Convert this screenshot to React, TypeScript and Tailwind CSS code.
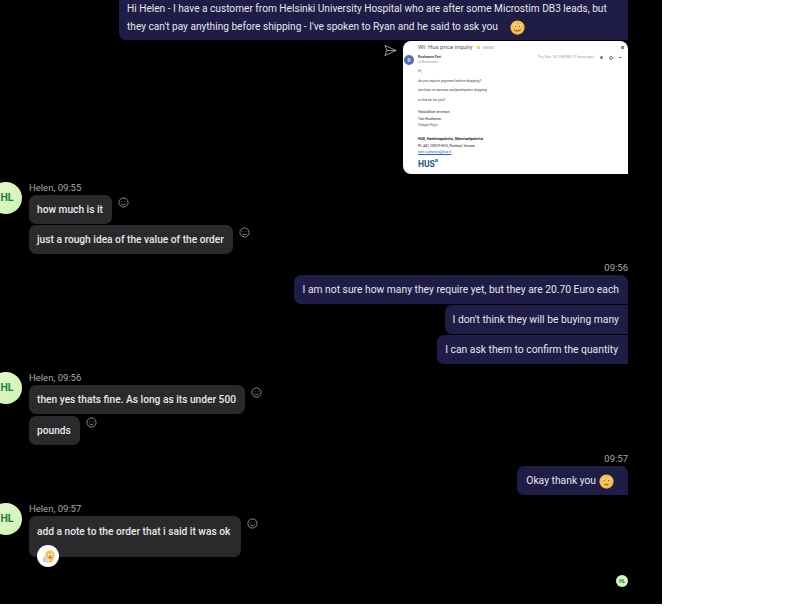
import { ReactNode } from 'react';

const font = { fontFamily: 'Roboto, "Noto Sans", sans-serif' };

function Smile({ className = '' }: { className?: string }) {
  return (
    <svg viewBox="0 0 12 12" className={`shrink-0 text-[#b5b5b5] ${className}`} fill="none" stroke="currentColor" strokeWidth="0.8">
      <circle cx="6" cy="6" r="5" />
      <circle cx="4.2" cy="4.8" r="0.5" fill="currentColor" stroke="none" />
      <circle cx="7.8" cy="4.8" r="0.5" fill="currentColor" stroke="none" />
      <path d="M3.6 7.4c1.2 1.4 3.6 1.4 4.8 0" />
    </svg>
  );
}

function Emoji({ wink = false }: { wink?: boolean }) {
  return (
    <svg viewBox="0 0 16 16" className="w-[15px] h-[15px] shrink-0">
      <circle cx="8" cy="8" r="7.6" fill="#f6c04a" />
      <circle cx="5.4" cy="6.4" r="1.5" fill="#fff" />
      <circle cx="10.6" cy="6.4" r="1.5" fill="#fff" />
      <circle cx="5.6" cy="6.6" r="0.8" fill="#4a3510" />
      <circle cx="10.4" cy="6.6" r="0.8" fill="#4a3510" />
      <path d={wink ? 'M6 11.4h4' : 'M4.6 10.4c1.8 1.8 5 1.8 6.8 0'} fill="none" stroke="#6b4a10" strokeWidth="1" />
    </svg>
  );
}

function ThinkEmoji() {
  return (
    <svg viewBox="0 0 16 16" className="w-[15px] h-[15px] shrink-0">
      <circle cx="9.5" cy="6.5" r="5" fill="#f6c04a" />
      <circle cx="8" cy="5.6" r="1" fill="#fff" />
      <circle cx="11.4" cy="5.6" r="1" fill="#fff" />
      <path d="M8 9h3" fill="none" stroke="#6b4a10" strokeWidth="0.9" />
      <rect x="2" y="8" width="6" height="6.5" rx="1" fill="#d4d4d4" />
      <path d="M9 10.5h4l-1 4H8z" fill="#f6c04a" />
    </svg>
  );
}

function Avatar() {
  return (
    <div className="w-[22px] h-[32px] mt-[1px] shrink-0 overflow-hidden">
      <div className="w-[32px] h-[32px] -ml-[10px] rounded-full bg-gradient-to-br from-[#e6fbd2] to-[#cdf2ae] flex items-center justify-center text-[10.5px] font-bold text-[#15803d]">
        <span className="pl-[2px]">HL</span>
      </div>
    </div>
  );
}

function Incoming({ time, children }: { time: string; children: ReactNode }) {
  return (
    <div className="flex gap-[7px]">
      <Avatar />
      <div className="flex flex-col">
        <div className="text-[9.5px] leading-[14px] text-[#a8a8a8]">Helen, {time}</div>
        {children}
      </div>
    </div>
  );
}

function Bubble({ text, iconTop = 2, mb = 1 }: { text: string; iconTop?: number; mb?: number }) {
  return (
    <div className="flex items-start gap-[6px]" style={{ marginBottom: mb }}>
      <div className="h-[29px] pl-[8px] pr-[9px] pt-[1px] rounded-[7px] bg-[#2a2a2c] flex items-center text-[10.2px] font-medium text-[#e8e8e8] whitespace-nowrap">
        {text}
      </div>
      <div style={{ marginTop: iconTop }}><Smile className="w-[11px] h-[11px]" /></div>
    </div>
  );
}

function Mine({ children, className = '' }: { children: ReactNode; className?: string }) {
  return (
    <div className={`h-[29px] pt-[1px] rounded-l-[7px] bg-[#1f1c45] flex items-center text-[10.3px] text-[#e6e6ee] whitespace-nowrap ${className}`}>
      {children}
    </div>
  );
}

function EmailShot() {
  return (
    <div className="w-[225px] h-[133px] bg-white rounded-l-[8px] rounded-tr-[8px] pl-[1px] pt-[2px] text-[3.5px] leading-[6.7px] text-[#666]">
      <div className="flex items-center pl-[14px] pr-[4px] text-[6px] leading-[8px] text-[#555]">
        <span>WI: Hus price inquiry</span>
        <span className="w-[3px] h-[3px] ml-[4px] bg-[#f2d35f]"></span>
        <span className="w-[11px] h-[3px] ml-[3px] bg-[#d8d8d8]"></span>
        <span className="w-[3px] h-[3px] ml-auto bg-[#888]"></span>
      </div>
      <div className="flex mt-[4px]">
        <div className="w-[10px] h-[10px] rounded-full bg-[#5768b8] text-white text-[5px] leading-[10px] text-center shrink-0">R</div>
        <div className="ml-[4px] flex-1">
          <div className="flex items-center pr-[6px] leading-[5px]">
            <span className="font-bold text-[#444]">Ruohonen Pori</span>
            <span className="ml-auto text-[#999]">Thu, Nov 14, 9:58 PM (12 hours ago)</span>
            <span className="w-[3px] h-[3px] ml-[6px] bg-[#777] rounded-full"></span>
            <span className="w-[4px] h-[4px] ml-[6px] border border-[#777] rounded-full"></span>
            <span className="w-[3px] h-[1px] ml-[6px] bg-[#777]"></span>
          </div>
          <div className="text-[#999] leading-[5px]">to Ruohonen</div>
          <div className="mt-[3px]">Hi,</div>
          <div className="mt-[3px] text-[#444]">do you require payment before shipping?</div>
          <div className="mt-[3px] text-[#444]">tarvitsta ve oamsas anylpeshipsten shipping</div>
          <div className="mt-[3px] text-[#444]">is this ok for you?</div>
          <div className="mt-[5px] text-[#222]">Ystävällisin terveisin</div>
          <div className="text-[#222]">Toni Ruohonen</div>
          <div className="text-[#555]">Ostajat Hyyn</div>
          <div className="mt-[7px] font-bold text-[#222]">HUS, Hankintapalvelut, Materiaalipalvelut</div>
          <div className="text-[#222]">PL 441, 00029 HUS, Ruskeat, Vantaa</div>
          <div className="text-[#3157c8] underline">toni.ruohonen@hus.fi</div>
          <div className="relative mt-[4px] w-fit text-[8.5px] leading-[9px] font-bold text-[#1c5a80]">
            HUS
            <span className="absolute -right-[3px] -top-[1px] w-[3px] h-[3px] bg-[#38b59a]"></span>
          </div>
        </div>
      </div>
    </div>
  );
}

export default function App() {
  return (
    <div className="h-[612px] bg-white overflow-hidden" style={font}>
      <div className="w-[662px] h-[604px] bg-black overflow-hidden flex flex-col">
        <div className="flex flex-col items-end pr-[34px]">
          <div className="w-[509px] h-[40px] rounded-bl-[7px] bg-[#1f1c45] pl-[8px] text-[10.15px] leading-[18px] text-[#e6e6ee] whitespace-nowrap flex flex-col justify-end pb-[4px]">
            <div>Hi Helen - I have a customer from Helsinki University Hospital who are after some Microstim DB3 leads, but</div>
            <div className="flex items-center gap-[12px]">they can't pay anything before shipping - I've spoken to Ryan and he said to ask you <Emoji /></div>
          </div>
          <div className="flex items-start gap-[6px] mt-[1px]">
            <svg viewBox="0 0 14 14" className="w-[13px] h-[13px] mt-[3px]" fill="none" stroke="#c8c8c8" strokeWidth="0.8" strokeLinejoin="round">
              <path d="M1 1.5 13 7 1 12.5l2.2-5.5zM3.2 7H13" />
            </svg>
            <EmailShot />
          </div>
        </div>

        <div className="mt-[7px]">
          <Incoming time="09:55">
            <Bubble text="how much is it" />
            <Bubble text="just a rough idea of the value of the order" />
          </Incoming>
        </div>

        <div className="flex flex-col items-end pr-[34px] mt-[6px]">
          <div className="text-[9.5px] leading-[14px] text-[#a8a8a8]">09:56</div>
          <Mine className="pl-[9px] pr-[9px] rounded-tr-[7px] mb-[1px]">I am not sure how many they require yet, but they are 20.70 Euro each</Mine>
          <Mine className="pl-[8px] pr-[9px] mb-[1px]">I don't think they will be buying many</Mine>
          <Mine className="pl-[8px] pr-[10px]">I can ask them to confirm the quantity</Mine>
        </div>

        <div className="mt-[7px]">
          <Incoming time="09:56">
            <Bubble text="then yes thats fine. As long as its under 500" mb={2} />
            <Bubble text="pounds" iconTop={1} mb={0} />
          </Incoming>
        </div>

        <div className="flex flex-col items-end pr-[34px] mt-[7px]">
          <div className="text-[9.5px] leading-[14px] text-[#a8a8a8]">09:57</div>
          <Mine className="pl-[9px] pr-[14px] rounded-tr-[7px] gap-[3px]">Okay thank you <Emoji wink /></Mine>
        </div>

        <div className="mt-[7px]">
          <Incoming time="09:57">
            <div className="flex items-start gap-[6px]">
              <div className="relative h-[41px] pl-[8px] pr-[11px] pt-[9px] rounded-[7px] bg-[#2a2a2c] text-[10.2px] leading-[14px] font-medium text-[#e8e8e8] whitespace-nowrap">
                add a note to the order that i said it was ok
                <div className="absolute left-[8px] top-[29px] w-[22px] h-[22px] rounded-full bg-white flex items-center justify-center">
                  <ThinkEmoji />
                </div>
              </div>
              <div className="mt-[2px]"><Smile className="w-[11px] h-[11px]" /></div>
            </div>
          </Incoming>
        </div>

        <div className="flex justify-end pr-[34px] mt-[18px]">
          <div className="w-[12px] h-[12px] rounded-full bg-[#d9f7bf] text-[5px] leading-[12px] font-bold text-center text-[#15803d]">HL</div>
        </div>
      </div>
    </div>
  );
}
